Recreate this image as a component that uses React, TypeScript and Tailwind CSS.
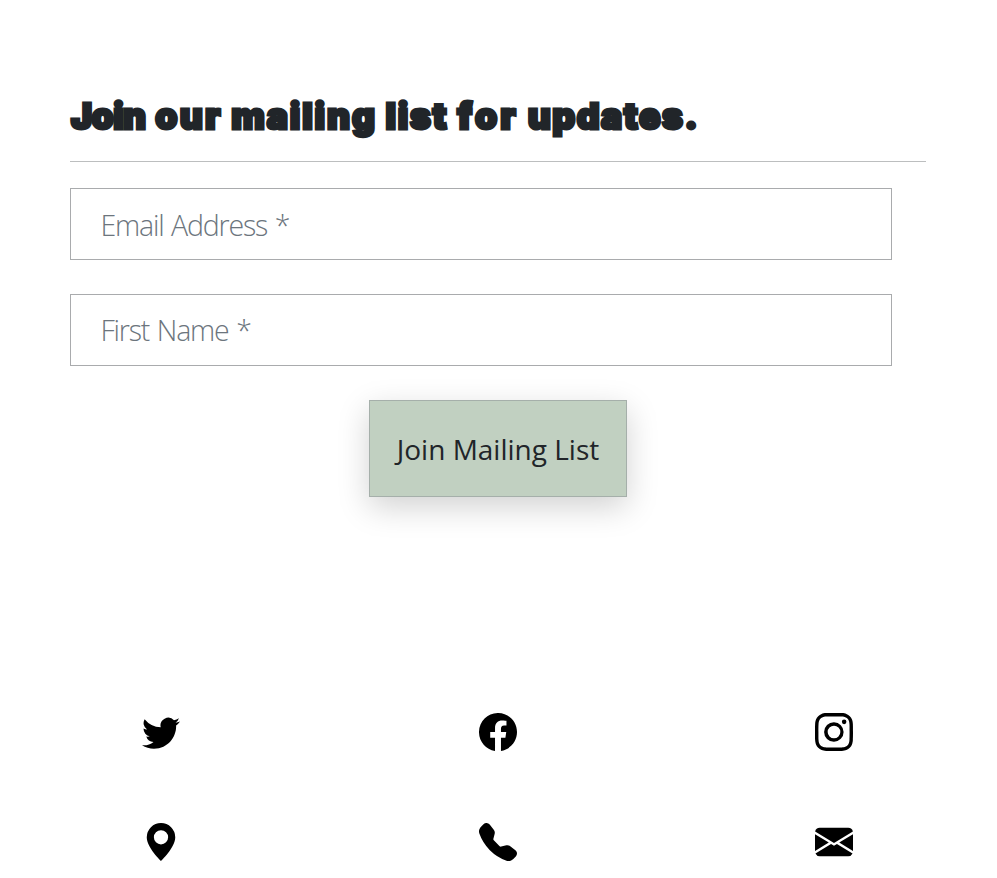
import React from "react";
import { BsTwitter, BsFacebook, BsInstagram, BsGeoAltFill, BsTelephoneFill, BsEnvelopeFill } from "react-icons/bs";

const contacts = [
  { label: "Twitter", Icon: BsTwitter },
  { label: "Facebook", Icon: BsFacebook },
  { label: "Instagram", Icon: BsInstagram },
  { label: "Location", Icon: BsGeoAltFill },
  { label: "Phone", Icon: BsTelephoneFill },
  { label: "Email", Icon: BsEnvelopeFill },
];

const field =
  "block h-[72px] w-[822px] border border-[#a9abad] bg-white px-[29.5px] font-['Open_Sans','Noto_Sans',sans-serif] text-[28.5px] font-light tracking-[-1.2px] [word-spacing:1.5px] text-[#212529] outline-none placeholder:text-[#6c757d] placeholder:opacity-100";

export default function App() {
  return (
    <main className="h-[878px] overflow-hidden bg-white pt-[92px] text-[#212529]">
      <section className="ml-[70px] w-[856px]">
        <h2 className="h-[69px] whitespace-nowrap pl-px font-['Inter',sans-serif] text-[35.5px] font-black leading-[49px] tracking-[1.7px] [-webkit-text-stroke:3px_#212529]">
          <span className="mr-px tracking-[-0.6px]">Join</span> <span className="tracking-[2.2px]">our</span>{" "}
          <span className="tracking-[1.9px]">mailing</span> list <span className="tracking-[3.2px]">for</span>{" "}
          <span className="tracking-[1.5px]">updates.</span>
        </h2>
        <hr className="border-t border-[#bcbebf]" />
        <form className="mt-[26px] flex flex-col gap-[34px]">
          <input className={`${field} pt-[1px]`} placeholder="Email Address *" />
          <input className={field} placeholder="First Name *" />
          <button
            type="button"
            className="ml-[299px] h-[97px] w-[258px] whitespace-nowrap border border-[#a5afaa] bg-[#c1d0c1] font-['Open_Sans','Noto_Sans',sans-serif] text-[28px] shadow-[0_10px_30px_rgba(0,0,0,0.18)]"
          >
            Join Mailing List
          </button>
        </form>
      </section>
      <nav className="mt-[216px] -ml-[7px] grid w-[1009.6px] grid-cols-3 justify-items-center gap-y-[72px] text-black">
        {contacts.map(({ label, Icon }) => (
          <Icon key={label} size={38} />
        ))}
      </nav>
    </main>
  );
}
